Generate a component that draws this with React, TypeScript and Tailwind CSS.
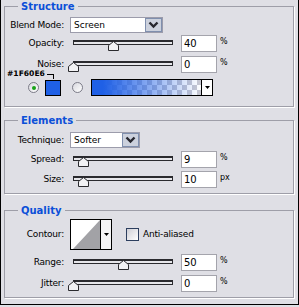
import React from "react";

const font = "font-['DejaVu_Sans',sans-serif]";

function Label({ children }: { children: React.ReactNode }) {
  return (
    <div className="w-[59px] shrink-0 text-right text-[9px] leading-[11px] text-black tracking-[-0.2px]">
      {children}
    </div>
  );
}

function Slider({ value }: { value: number }) {
  return (
    <div className="relative ml-[4px] h-[17px] w-[110px] shrink-0">
      <div className="absolute left-[5px] right-[5px] top-[5px] h-[5px] border-x border-b border-t-2 border-[#2a2a2e] bg-[#e6e6ea]" />
      <svg
        className="absolute top-[6px]"
        style={{ left: value }}
        width="11"
        height="10"
        viewBox="0 0 11 10"
      >
        <polygon
          points="0.5,9.5 0.5,4.5 5.5,0.5 10.5,4.5 10.5,9.5"
          fill="#f2f2f4"
          stroke="#2a2a2e"
        />
      </svg>
    </div>
  );
}

function NumInput({ v }: { v: string }) {
  return (
    <div className="ml-[3px] h-[17px] w-[36px] shrink-0 border border-[#a4a4ac] bg-white pl-[2px] text-[10px] leading-[15px] text-black">
      {v}
    </div>
  );
}

function Unit({ u }: { u: string }) {
  return (
    <div className="ml-[3px] mt-[3px] self-start text-[8px] leading-[8px] text-black">
      {u}
    </div>
  );
}

function SliderRow({
  label,
  pos,
  value,
  unit,
  mt,
}: {
  label: string;
  pos: number;
  value: string;
  unit: string;
  mt: string;
}) {
  return (
    <div className={`flex h-[17px] items-center ${mt}`}>
      <Label>{label}</Label>
      <Slider value={pos} />
      <NumInput v={value} />
      <Unit u={unit} />
    </div>
  );
}

function Chevron() {
  return (
    <div className="flex h-full w-[17px] shrink-0 items-center justify-center border border-[#7f8fae] bg-[#ccd1dd]">
      <svg width="11" height="8" viewBox="0 0 11 8">
        <path
          d="M1.5 1.5 L5.5 5.5 L9.5 1.5"
          fill="none"
          stroke="#26262e"
          strokeWidth="2.4"
        />
      </svg>
    </div>
  );
}

function Select({ text, w }: { text: string; w: string }) {
  return (
    <div
      className={`ml-[6px] flex h-[16px] ${w} shrink-0 items-stretch border border-[#9c9cab] bg-white`}
    >
      <div className="flex-1 pl-[3px] text-[9px] leading-[14px] text-black">
        {text}
      </div>
      <Chevron />
    </div>
  );
}

function Radio({ checked }: { checked: boolean }) {
  return (
    <div className="flex h-[11px] w-[11px] shrink-0 items-center justify-center rounded-full border border-[#7c7c88] bg-[linear-gradient(135deg,#d8d8de,#ffffff)]">
      {checked && <div className="h-[4px] w-[4px] rounded-full bg-[#18a218]" />}
    </div>
  );
}

function Section({
  title,
  mt,
  children,
}: {
  title: string;
  mt: string;
  children: React.ReactNode;
}) {
  return (
    <fieldset
      className={`ml-[3px] w-[290px] border border-[#9e9ea8] shadow-[1px_1px_0_#ffffff] ${mt}`}
    >
      <legend className="ml-[13px] px-[3px] text-[10px] font-bold leading-[13px] text-[#0b4fd8]">
        {title}
      </legend>
      {children}
    </fieldset>
  );
}

export default function App() {
  return (
    <div className={`h-[307px] w-[299px] bg-[#dfdfe5] ${font}`}>
      <div className="h-[305px] w-[299px] border-x border-b border-black">
        <Section title="Structure" mt="mt-0">
          <div className="pb-[10px]">
            <div className="mt-[4px] flex h-[16px] items-center">
              <Label>Blend Mode:</Label>
              <Select text="Screen" w="w-[93px]" />
            </div>
            <SliderRow label="Opacity:" pos={40} value="40" unit="%" mt="mt-[2px]" />
            <SliderRow label="Noise:" pos={0} value="0" unit="%" mt="mt-[4px]" />
            <div className="relative mt-[6px] flex h-[17px] items-center pl-[23px]">
              <div className="absolute left-[2px] top-[-9px] text-[7.6px] font-bold leading-[8px] text-black">
                #1F60E6
              </div>
              <div className="absolute left-[42px] top-[-5px] h-[5px] w-[7px] border-r border-t border-black" />
              <Radio checked />
              <div className="ml-[6px] h-[16px] w-[16px] shrink-0 border border-black bg-[#1f60e6]" />
              <div className="ml-[11px]">
                <Radio checked={false} />
              </div>
              <div className="ml-[8px] flex h-[17px] w-[122px] shrink-0 border border-black bg-white">
                <div className="h-full flex-1 bg-[repeating-conic-gradient(#c9c9d2_0%_25%,#ffffff_0%_50%)] bg-[length:10px_10px]">
                  <div className="h-full w-full bg-linear-to-r from-[#1f60e6] from-10% to-[#1f60e600]" />
                </div>
                <div className="flex w-[11px] shrink-0 items-center justify-center border-l border-black bg-white">
                  <svg width="5" height="3" viewBox="0 0 5 3">
                    <polygon points="0,0 5,0 2.5,3" fill="#000" />
                  </svg>
                </div>
              </div>
            </div>
          </div>
        </Section>

        <Section title="Elements" mt="mt-[7px]">
          <div className="pb-[5px]">
            <div className="mt-[5px] flex h-[16px] items-center">
              <Label>Technique:</Label>
              <Select text="Softer" w="w-[70px]" />
            </div>
            <SliderRow label="Spread:" pos={9.5} value="9" unit="%" mt="mt-[3px]" />
            <SliderRow label="Size:" pos={9.5} value="10" unit="px" mt="mt-[3px]" />
          </div>
        </Section>

        <Section title="Quality" mt="mt-[10px]">
          <div className="pb-[5px]">
            <div className="mt-[2px] flex h-[31px] items-center">
              <Label>Contour:</Label>
              <div className="ml-[6px] flex h-[31px] w-[42px] shrink-0 border border-black bg-white">
                <div className="h-full w-[29px] shrink-0">
                  <svg width="29" height="29" viewBox="0 0 29 29">
                    <polygon points="2,29 29,0 29,29" fill="#a2a2a6" />
                  </svg>
                </div>
                <div className="flex flex-1 items-center justify-center border-l border-black bg-[#f4f4f6]">
                  <svg width="5" height="3" viewBox="0 0 5 3">
                    <polygon points="0,0 5,0 2.5,3" fill="#000" />
                  </svg>
                </div>
              </div>
              <div className="ml-[14px] h-[13px] w-[13px] shrink-0 border border-[#2c3e5e] bg-[linear-gradient(135deg,#cfcfd6,#ffffff)]" />
              <div className="ml-[4px] text-[9px] leading-[11px] text-black tracking-[-0.2px]">
                Anti-aliased
              </div>
            </div>
            <SliderRow label="Range:" pos={50} value="50" unit="%" mt="mt-[4px]" />
            <SliderRow label="Jitter:" pos={0} value="0" unit="%" mt="mt-[4px]" />
          </div>
        </Section>
      </div>
    </div>
  );
}
